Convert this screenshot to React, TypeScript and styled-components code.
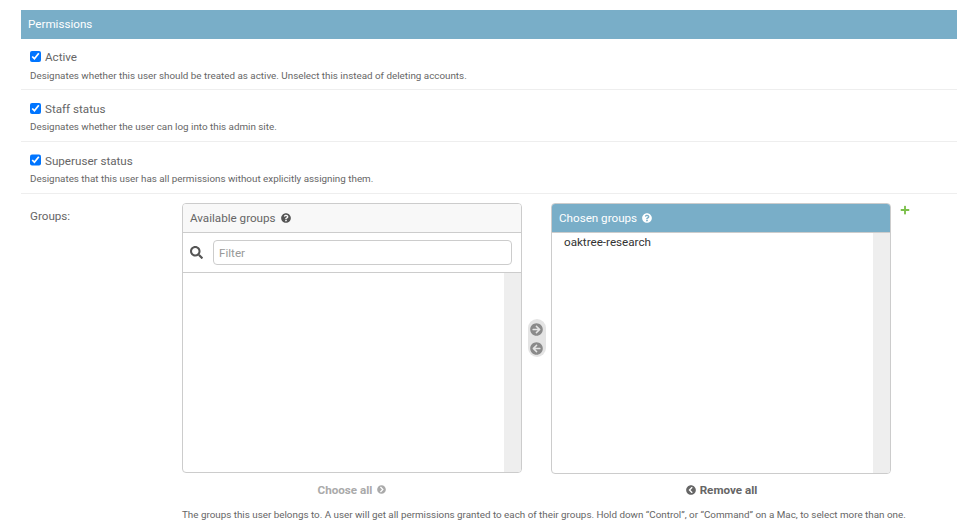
import * as React from 'react';
import styled, { createGlobalStyle } from 'styled-components';
import {
  FaArrowCircleLeft,
  FaArrowCircleRight,
  FaChevronCircleLeft,
  FaChevronCircleRight,
  FaPlus,
  FaQuestionCircle,
  FaSearch,
} from 'react-icons/fa';

const GlobalStyle = createGlobalStyle`
  html, body {
    margin: 0;
    padding: 0;
    background: #fff;
    overflow: hidden;
  }
  body {
    font-family: Roboto, "Liberation Sans", sans-serif;
    font-size: 11.65px;
    color: #666;
  }
`;

const Page = styled.div`
  width: 957px;
  height: 529px;
  padding: 10px 0 0 21px;
  box-sizing: border-box;
`;

const SectionTitle = styled.h2`
  margin: 0;
  height: 28.7px;
  padding: 0 7px;
  background: #79aec8;
  color: #fff;
  font-size: 11.65px;
  font-weight: 400;
  line-height: 28px;
`;

const CheckRow = styled.div`
  height: 51.7px;
  box-sizing: border-box;
  padding: 10.45px 9px 0;
  border-bottom: 1px solid #eee;
`;

const CheckLabel = styled.label`
  display: flex;
  align-items: center;
  height: 16px;
  line-height: 16px;
  color: #666;
`;

const Checkbox = styled.input`
  width: 11.2px;
  height: 11.2px;
  margin: 0 3.8px 1px 0;
`;

const Help = styled.div`
  margin-top: 3.6px;
  font-size: 9.83px;
  line-height: 14px;
  color: #666;
`;

const GroupsRow = styled.div`
  display: flex;
  padding: 9px 0 0 9px;
`;

const GroupsLabel = styled.div`
  flex: none;
  width: 152px;
  padding-top: 5px;
  line-height: 16px;
`;

const SelectorColumn = styled.div`
  display: flex;
  flex-direction: column;
`;

const Selector = styled.div`
  display: flex;
  align-items: flex-start;
`;

const Box = styled.div<{ $tall?: boolean }>`
  flex: none;
  width: 340px;
  height: ${({ $tall }) => ($tall ? '271px' : '270px')};
  box-sizing: border-box;
  display: flex;
  flex-direction: column;
  border: 1px solid #ccc;
  border-radius: 4px;
  overflow: hidden;
`;

const BoxTitle = styled.div<{ $chosen?: boolean }>`
  height: 28px;
  flex: none;
  padding: 0 7px;
  display: flex;
  align-items: center;
  gap: 5px;
  background: ${({ $chosen }) => ($chosen ? '#79aec8' : '#f8f8f8')};
  color: ${({ $chosen }) => ($chosen ? '#fff' : '#666')};
  border-bottom: 1px solid #ccc;
`;

const FilterRow = styled.div`
  height: 39px;
  flex: none;
  padding: 0 9px 0 7px;
  display: flex;
  align-items: center;
  gap: 10px;
  color: #555;
  border-bottom: 1px solid #ccc;
`;

const FilterInput = styled.input`
  flex: 1;
  min-width: 0;
  height: 25px;
  box-sizing: border-box;
  padding: 1px 5px 0;
  border: 1px solid #ccc;
  border-radius: 4px;
  font-family: inherit;
  font-size: 11.65px;
  outline: none;
  &::placeholder {
    color: #999;
  }
`;

const ListArea = styled.div`
  flex: 1;
  display: flex;
  min-height: 0;
`;

const ListItems = styled.div`
  flex: 1;
  padding: 1px 12px;
  line-height: 16px;
  color: #333;
`;

const ScrollTrack = styled.div`
  width: 17px;
  background: #eee;
`;

const Gutter = styled.div`
  flex: none;
  width: 29px;
  display: flex;
  justify-content: center;
`;

const Movers = styled.div`
  width: 18px;
  height: 38px;
  margin-top: 116px;
  padding-top: 2px;
  box-sizing: border-box;
  border-radius: 9px;
  background: #e4e4e4;
  display: flex;
  flex-direction: column;
  align-items: center;
  justify-content: center;
  gap: 6px;
  color: #8a8a8a;
`;

const AddLink = styled.div`
  margin: 2px 0 0 9px;
  color: #7cc04b;
  line-height: 0;
`;

const Actions = styled.div`
  display: flex;
  margin-top: 8px;
`;

const ActionCell = styled.div<{ $active?: boolean }>`
  flex: none;
  width: 340px;
  display: flex;
  align-items: center;
  justify-content: center;
  gap: ${({ $active }) => ($active ? '4px' : '5px')};
  padding-left: ${({ $active }) => ($active ? '1px' : '0')};
  box-sizing: border-box;
  font-weight: 700;
  line-height: 16px;
  color: ${({ $active }) => ($active ? '#666' : '#aaa')};
`;

const ActionGap = styled.div`
  width: 29px;
  flex: none;
`;

const GroupsHelp = styled.div`
  margin-top: 10px;
  font-size: 9.83px;
  line-height: 14px;
  white-space: nowrap;
`;

type CheckProps = { label: string; help: string };

const CheckField = ({ label, help }: CheckProps) => (
  <CheckRow>
    <CheckLabel>
      <Checkbox type="checkbox" defaultChecked />
      {label}
    </CheckLabel>
    <Help>{help}</Help>
  </CheckRow>
);

const App = () => {
  return (
    <Page>
      <GlobalStyle />
      <SectionTitle>Permissions</SectionTitle>
      <CheckField
        label="Active"
        help="Designates whether this user should be treated as active. Unselect this instead of deleting accounts."
      />
      <CheckField
        label="Staff status"
        help="Designates whether the user can log into this admin site."
      />
      <CheckField
        label="Superuser status"
        help="Designates that this user has all permissions without explicitly assigning them."
      />
      <GroupsRow>
        <GroupsLabel>Groups:</GroupsLabel>
        <SelectorColumn>
          <Selector>
            <Box>
              <BoxTitle>
                Available groups <FaQuestionCircle size={10} color="#555" />
              </BoxTitle>
              <FilterRow>
                <FaSearch size={13} />
                <FilterInput placeholder="Filter" readOnly />
              </FilterRow>
              <ListArea>
                <ListItems />
                <ScrollTrack />
              </ListArea>
            </Box>
            <Gutter>
              <Movers>
                <FaArrowCircleRight size={13} />
                <FaArrowCircleLeft size={13} />
              </Movers>
            </Gutter>
            <Box $tall>
              <BoxTitle $chosen>
                Chosen groups <FaQuestionCircle size={10} color="#fff" />
              </BoxTitle>
              <ListArea>
                <ListItems>oaktree-research</ListItems>
                <ScrollTrack />
              </ListArea>
            </Box>
            <AddLink>
              <FaPlus size={10} />
            </AddLink>
          </Selector>
          <Actions>
            <ActionCell>
              Choose all <FaChevronCircleRight size={9} />
            </ActionCell>
            <ActionGap />
            <ActionCell $active>
              <FaChevronCircleLeft size={10} /> Remove all
            </ActionCell>
          </Actions>
          <GroupsHelp>
            The groups this user belongs to. A user will get all permissions granted to each of their
            groups. Hold down “Control”, or “Command” on a Mac, to select more than one.
          </GroupsHelp>
        </SelectorColumn>
      </GroupsRow>
    </Page>
  );
};

export default App;
